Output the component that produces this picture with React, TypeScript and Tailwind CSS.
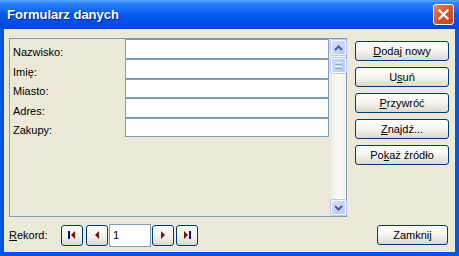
import React from "react";

const font = { fontFamily: '"Liberation Sans", Arial, sans-serif' };

function XpButton({ children, className = "" }: { children: React.ReactNode; className?: string }) {
  return (
    <div
      className={
        "flex items-center justify-center rounded-[3px] border border-[#003C74] bg-gradient-to-b from-[#FFFFFF] via-[#F5F4EF] to-[#DCD8CC] text-[11px] leading-[13px] text-black " +
        className
      }
      style={font}
    >
      {children}
    </div>
  );
}

function ScrollBtn({ dir }: { dir: "up" | "down" }) {
  return (
    <div className="flex h-[15px] w-[15px] items-center justify-center rounded-[2px] border border-[#FFFFFF] bg-gradient-to-br from-[#D6E3FD] to-[#B4C8F6] shadow-[0_0_0_1px_#B7C9EF]">
      <svg width="9" height="6" viewBox="0 0 9 6">
        {dir === "up" ? (
          <path d="M1 5 L4.5 1.5 L8 5" stroke="#4D6185" strokeWidth="2" fill="none" />
        ) : (
          <path d="M1 1 L4.5 4.5 L8 1" stroke="#4D6185" strokeWidth="2" fill="none" />
        )}
      </svg>
    </div>
  );
}

function NavIcon({ kind }: { kind: "first" | "prev" | "next" | "last" }) {
  return (
    <svg width="12" height="10" viewBox="0 0 12 10">
      {kind === "first" && (
        <>
          <rect x="2" y="1" width="2" height="8" fill="#0A0A8A" />
          <path d="M9 1 L5 5 L9 9 Z" fill="#8B0A0A" />
        </>
      )}
      {kind === "prev" && <path d="M8 1 L4 5 L8 9 Z" fill="#8B0A0A" />}
      {kind === "next" && <path d="M4 1 L8 5 L4 9 Z" fill="#8B0A0A" />}
      {kind === "last" && (
        <>
          <path d="M3 1 L7 5 L3 9 Z" fill="#8B0A0A" />
          <rect x="8" y="1" width="2" height="8" fill="#0A0A8A" />
        </>
      )}
    </svg>
  );
}

export default function App() {
  const rows: { label: React.ReactNode; h: string }[] = [
    { label: "Nazwisko:", h: "h-[20px]" },
    { label: "Imię:", h: "h-[20px]" },
    { label: "Miasto:", h: "h-[19px]" },
    { label: "Adres:", h: "h-[20px]" },
    { label: "Zakupy:", h: "h-[19px]" },
  ];
  return (
    <div className="flex h-[256px] w-[459px] flex-col overflow-hidden bg-[#0055E5]" style={font}>
      {/* Title bar */}
      <div className="relative flex h-[29px] shrink-0 items-center bg-gradient-to-b from-[#3C8EFC] via-[#0058EE] to-[#0047D6] pl-[7px]">
        <div className="absolute left-0 right-0 top-0 h-[2px] bg-[#4C9BFF]" />
        <span
          className="text-[13px] font-bold text-white"
          style={{ textShadow: "1px 1px 0 #0A1E8C" }}
        >
          Formularz danych
        </span>
        <div className="ml-auto mr-[5px] flex h-[21px] w-[21px] items-center justify-center rounded-[3px] border border-white bg-gradient-to-br from-[#E8825E] via-[#D9552E] to-[#C23F17]">
          <svg width="11" height="11" viewBox="0 0 11 11">
            <path d="M1.5 1.5 L9.5 9.5 M9.5 1.5 L1.5 9.5" stroke="white" strokeWidth="2.2" strokeLinecap="square" />
          </svg>
        </div>
      </div>

      {/* Body */}
      <div className="mx-[4px] mb-[4px] flex flex-1 flex-col bg-[#ECE9D8] pl-[5px] pr-[6px] pt-[9px]">
        <div className="flex">
          {/* Panel */}
          <div className="flex h-[179px] w-[338px] border border-[#7F9DB9] bg-[#ECE9D8]">
            <div className="flex w-[321px] flex-col">
              {rows.map((r, i) => (
                <div key={i} className={"flex " + r.h}>
                  <div className="flex w-[115px] items-end pl-[3px] text-[11px] leading-[13px] text-black">
                    {r.label}
                  </div>
                  <div className="h-full w-[204px] border border-[#7F9DB9] bg-white" />
                </div>
              ))}
            </div>
            {/* Scrollbar */}
            <div className="flex w-[15px] flex-col justify-between bg-gradient-to-r from-[#EEEDE5] via-[#FBFBF8] to-[#F3F1EC] pb-px pt-px">
              <div className="flex flex-col gap-[3px]">
                <ScrollBtn dir="up" />
                <div className="flex h-[15px] w-[15px] flex-col items-center justify-center gap-[1px] rounded-[2px] border border-white bg-gradient-to-r from-[#CBDAFC] to-[#B8CBF7] shadow-[0_0_0_1px_#B7C9EF]">
                  <div className="h-px w-[7px] bg-[#EEF4FE]" />
                  <div className="h-px w-[7px] bg-[#8CA5E0]" />
                  <div className="h-px w-[7px] bg-[#EEF4FE]" />
                  <div className="h-px w-[7px] bg-[#8CA5E0]" />
                </div>
              </div>
              <ScrollBtn dir="down" />
            </div>
          </div>

          {/* Right buttons */}
          <div className="ml-[8px] mt-[3px] flex w-[94px] flex-col gap-[6px]">
            <XpButton className="h-[20px]">
              <span><span className="underline">D</span>odaj nowy</span>
            </XpButton>
            <XpButton className="h-[20px]">
              <span>U<span className="underline">s</span>uń</span>
            </XpButton>
            <XpButton className="h-[20px]">
              <span><span className="underline">P</span>rzywróć</span>
            </XpButton>
            <XpButton className="h-[20px]">
              <span><span className="underline">Z</span>najdź...</span>
            </XpButton>
            <XpButton className="h-[20px]">
              <span>Po<span className="underline">k</span>aż źródło</span>
            </XpButton>
          </div>
        </div>

        {/* Bottom row */}
        <div className="mt-[6px] flex h-[24px] items-center">
          <div className="w-[52px] text-[11px] leading-[13px] text-black">
            <span className="underline">R</span>ekord:
          </div>
          <XpButton className="h-[21px] w-[22px]">
            <NavIcon kind="first" />
          </XpButton>
          <XpButton className="ml-[3px] h-[21px] w-[22px]">
            <NavIcon kind="prev" />
          </XpButton>
          <div className="ml-px flex h-[23px] w-[42px] items-center border border-[#7F9DB9] bg-white pl-[3px] text-[11px] text-black">
            1
          </div>
          <XpButton className="ml-px h-[21px] w-[22px]">
            <NavIcon kind="next" />
          </XpButton>
          <XpButton className="ml-[2px] h-[21px] w-[22px]">
            <NavIcon kind="last" />
          </XpButton>
          <XpButton className="ml-auto mr-px h-[20px] w-[71px]">
            <span>Zamknij</span>
          </XpButton>
        </div>
      </div>
    </div>
  );
}
